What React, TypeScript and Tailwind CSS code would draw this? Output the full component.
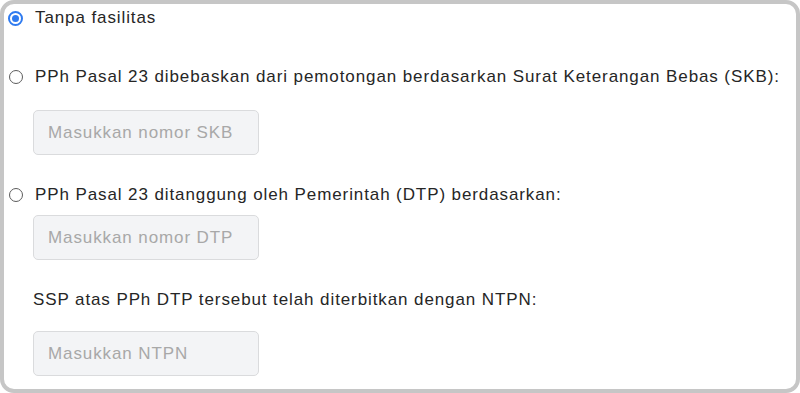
import { useState } from "react";

type Choice = "none" | "skb" | "dtp";

const Radio = ({ checked }: { checked: boolean }) =>
  checked ? (
    <span className="flex h-[15px] w-[15px] shrink-0 items-center justify-center rounded-full border-2 border-[#2f7bf0] bg-white">
      <span className="h-[7px] w-[7px] rounded-full bg-[#2f7bf0]" />
    </span>
  ) : (
    <span className="h-[14px] w-[14px] shrink-0 rounded-full border border-[#5c5c5c] bg-white" />
  );

const Field = ({ placeholder, className }: { placeholder: string; className: string }) => (
  <input
    type="text"
    placeholder={placeholder}
    className={`h-[45px] w-[226px] rounded-[5px] border border-[#dadbdd] bg-[#f3f4f6] px-[14px] text-[17px] tracking-[0.9px] text-[#333] outline-none placeholder:text-[#a8a8a8] ${className}`}
  />
);

const App = () => {
  const [choice, setChoice] = useState<Choice>("none");

  return (
    <div className="h-[393px] w-[800px] overflow-hidden bg-white font-['Liberation_Sans',Arial,sans-serif]">
      <div className="flex h-full w-full flex-col rounded-[14px] border-4 border-[#c6c6c6] bg-white pt-[2px] text-[17px] tracking-[0.9px] text-[#262626]">
        <label className="flex h-6 cursor-pointer items-center" onClick={() => setChoice("none")}>
          <span className="ml-[4px] flex w-[27px]">
            <Radio checked={choice === "none"} />
          </span>
          <span>Tanpa fasilitas</span>
        </label>

        <label className="mt-[35px] flex h-6 cursor-pointer items-center" onClick={() => setChoice("skb")}>
          <span className="ml-[5px] flex w-[26px]">
            <Radio checked={choice === "skb"} />
          </span>
          <span>PPh Pasal 23 dibebaskan dari pemotongan berdasarkan Surat Keterangan Bebas (SKB):</span>
        </label>
        <Field placeholder="Masukkan nomor SKB" className="ml-[29px] mt-[21px]" />

        <label className="mt-[28px] flex h-6 cursor-pointer items-center" onClick={() => setChoice("dtp")}>
          <span className="ml-[5px] flex w-[26px]">
            <Radio checked={choice === "dtp"} />
          </span>
          <span>PPh Pasal 23 ditanggung oleh Pemerintah (DTP) berdasarkan:</span>
        </label>
        <Field placeholder="Masukkan nomor DTP" className="ml-[29px] mt-[8px]" />

        <p className="ml-[29px] mt-[28px] h-6 leading-6">SSP atas PPh DTP tersebut telah diterbitkan dengan NTPN:</p>
        <Field placeholder="Masukkan NTPN" className="ml-[29px] mt-[19px]" />
      </div>
    </div>
  );
};

export default App;
